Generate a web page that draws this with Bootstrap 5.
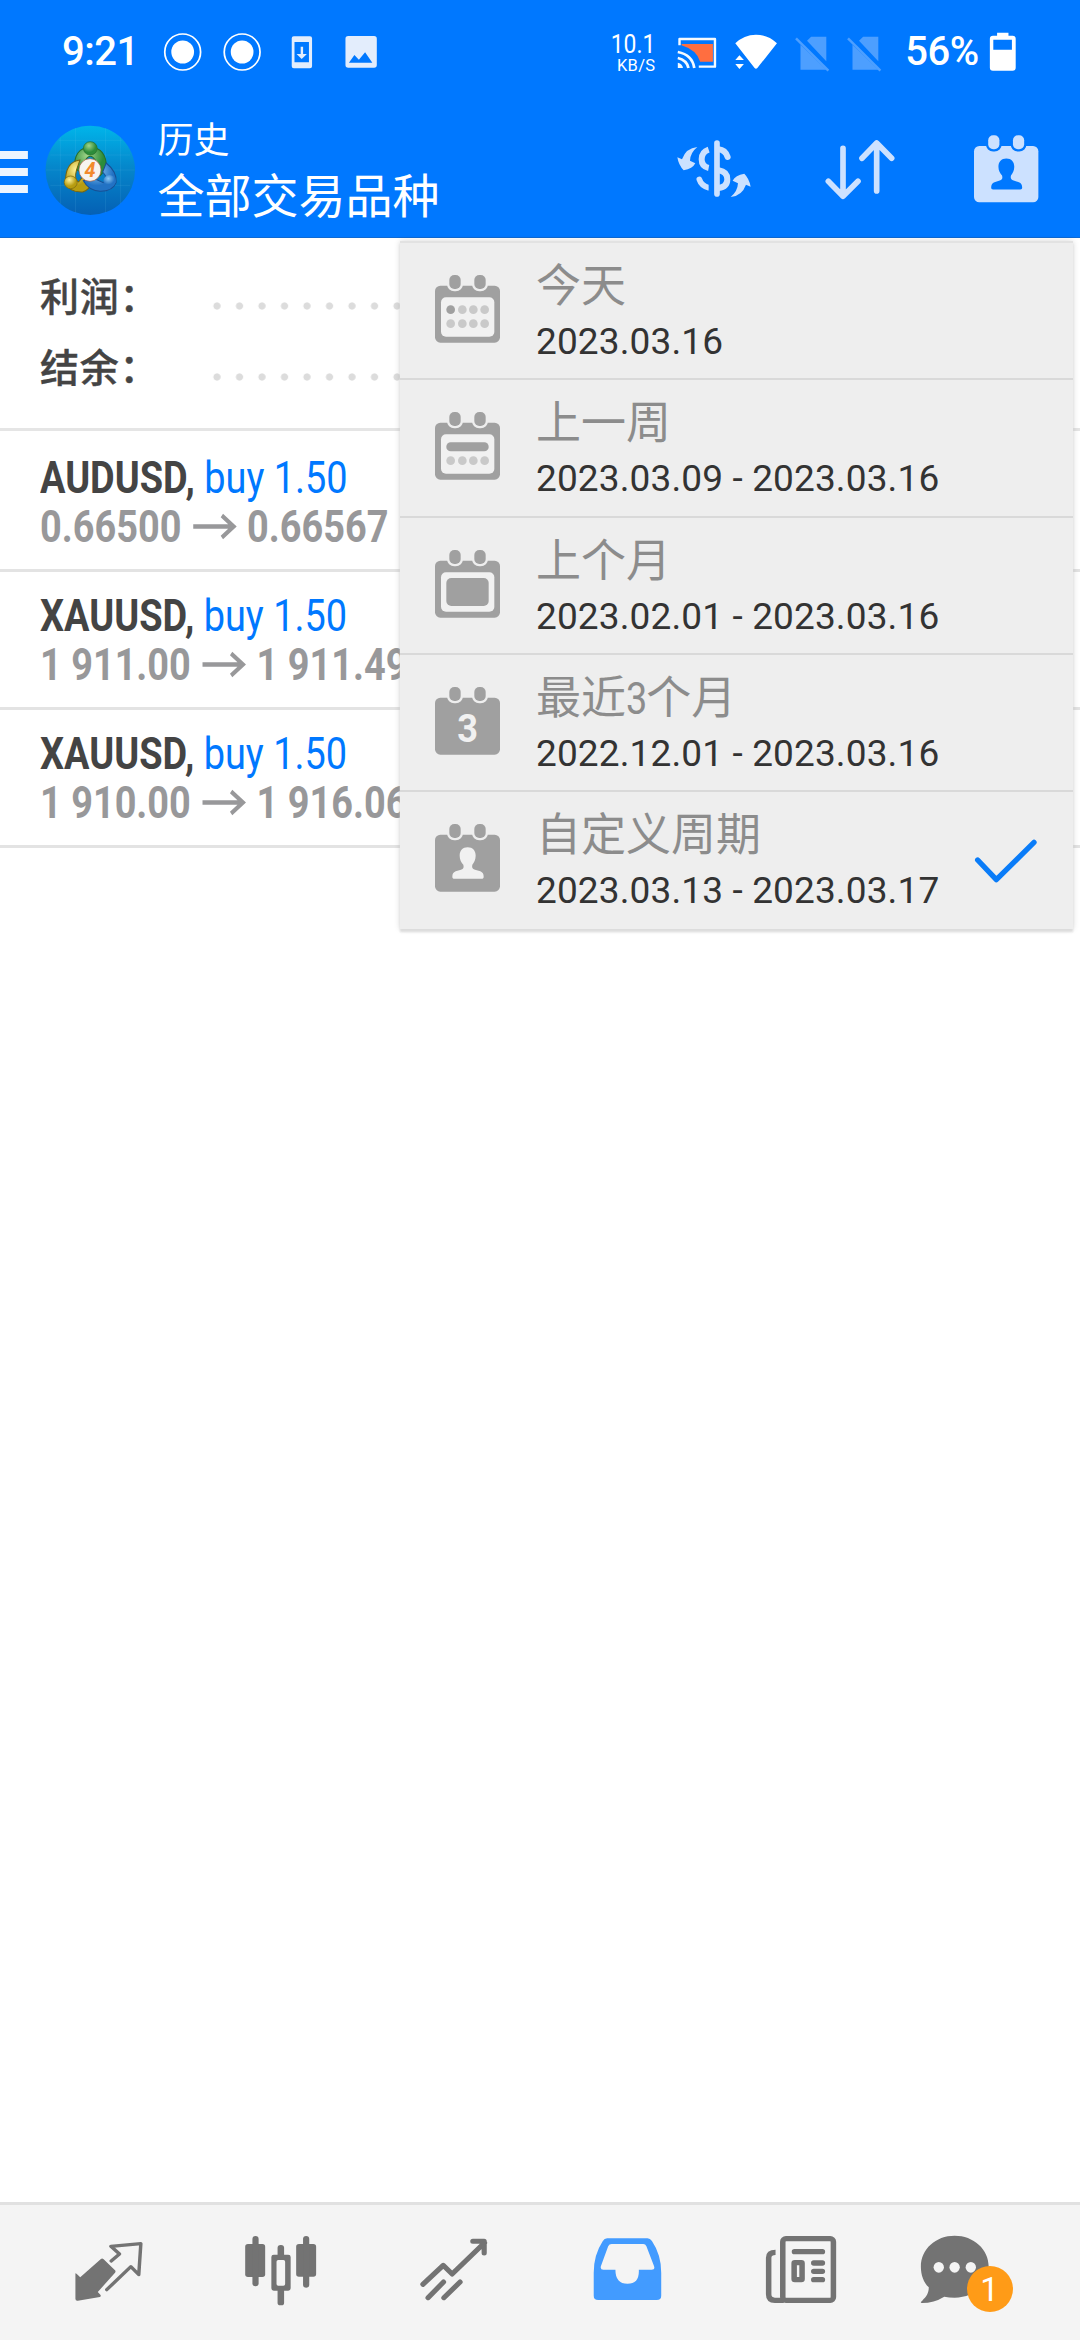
<!DOCTYPE html>
<html lang="zh-CN">
<head>
<meta charset="utf-8">
<meta name="viewport" content="width=device-width, initial-scale=1">
<title>历史</title>
<link href="https://cdn.jsdelivr.net/npm/bootstrap@5.3.0/dist/css/bootstrap.min.css" rel="stylesheet">
<style>
  :root { --brand: #0078ff; --icon: #cce1ff; --panel: #eeeeee; --grey: #a0a0a0; }
  body { font-family: Roboto, "Noto Sans CJK SC", sans-serif; height: 2340px; overflow: hidden; background: #fff; }
  svg { display: block; flex: none; overflow: visible; }
  .top-area { background: var(--brand); height: 238px; border-bottom: 1px solid #0e6ad4; }
  .status-row { height: 103px; }
  .clock { width: 161.8px; padding-left: 62px; font-size: 40px; font-weight: 500; line-height: 48px; letter-spacing: -.5px; }
  .net-speed { width: 134.3px; padding-right: 19px; font-size: 26px; line-height: 26px; padding-top: 2px; }
  .net-rate { transform: scaleX(.88); transform-origin: 100% 50%; }
  .net-unit { font-size: 16.5px; line-height: 18px; letter-spacing: .3px; }
  .percent { width: 95px; padding-left: 16px; font-size: 40px; font-weight: 500; line-height: 48px; letter-spacing: -.5px; }
  .app-row { height: 134px; padding-top: 17px; }
  .app-titles { padding-left: 13px; }
  .app-sub { font-size: 36px; line-height: 42px; }
  .app-main { font-size: 47px; line-height: 60px; margin-top: 5px; }
  .sum-box { height: 193px; padding: 31px 40px 0; border-bottom: 3px solid #e5e5e5; }
  .sum-line { height: 71px; font-size: 39px; font-weight: 500; line-height: 58px; color: #444; }
  .sum-label { width: 166px; letter-spacing: .8px; -webkit-text-stroke: .4px #444; }
  .dot-leader { height: 22px; background: radial-gradient(circle at 11px 11px, #dcdcdc 3.2px, transparent 4px) 0 0 / 22.5px 22px repeat-x; margin-top: 26px; }
  .deal { height: 138px; padding: 20px 0 0 40px; border-bottom: 3px solid #e3e3e3; font-size: 45px; line-height: 48.500px; }
  .deal:first-child { height: 141px; padding-top: 23px; }
  .squeeze { transform: scaleX(.842); transform-origin: 0 50%; white-space: pre; width: max-content; }
  .deal-name { color: #444; }
  .deal-side { color: var(--brand); }
  .deal-price { color: #98989a; font-weight: 700; }
  .deal-price svg { display: inline-block; vertical-align: 3px; margin: 0 13px 0 14px; }
  .period-menu { top: 3px; right: 7px; width: 673px; background: var(--panel); border-top: 2px solid #e2e2e2; box-shadow: 0 3px 2px #dcdcdc, 0 0 6px rgba(0,0,0,.16); }
  .period { height: 137.3px; background: transparent; border: 0; border-bottom: 2px solid #d9d9d9; border-radius: 0; padding: 0 35px 0 35px; }
  .period:last-child { border-bottom: 0; }
  .period-text { width: 475px; margin-left: 36px; }
  .period-title { font-size: 45px; line-height: 60px; color: #8c8c8c; padding-top: 14px; }
  .narrow-digit { display: inline-block; transform: scaleX(.84); margin: 0 -2.5px; }
  .period-range { font-size: 37px; line-height: 44px; color: #333; margin-top: 3px; letter-spacing: .13px; }
  .cal-ico { margin-top: 32px; }
  .tab-row { height: 138px; background: #f4f4f4; border-top: 3px solid #e1e1e1; }
  .tab-item { color: #737373; }
  .msg-count { left: 66.500px; top: 60.500px; width: 46px; height: 46px; background: #ff9b17; font-size: 33px; font-weight: 400; line-height: 47px; padding: 0; }
</style>
</head>
<body class="d-flex flex-column">

<svg width="0" height="0" class="position-absolute">
  <defs>
    <g id="calBase">
      <rect y="32" width="195" height="171" rx="16" fill="currentColor"/>
      <g stroke="var(--back)" stroke-width="14" fill="var(--back)"><rect x="43" y="2" width="34" height="40" rx="15"/><rect x="118" y="2" width="34" height="40" rx="15"/></g>
      <g fill="currentColor"><rect x="43" y="0" width="34" height="42" rx="15"/><rect x="118" y="0" width="34" height="42" rx="15"/></g>
    </g>
    <path id="person" d="M98 70c15 0 24 10 24 25 0 12-5 20-10 27-2 8 0 12 8 15l16 5c7 3 10 8 10 16 0 4-2 6-6 6H58c-4 0-6-2-6-6 0-8 3-13 10-16l16-5c8-3 9-7 7-15-6-7-11-15-11-27 0-15 9-25 24-25Z"/>
    <g id="sim"><path d="M774 120 786 108H830V182ZM755 132 830 207H755Z" fill="#4d9fff"/><path d="M742 113 836 210" stroke="#4d9fff" stroke-width="7"/></g>
    <linearGradient id="sky" x1="0" y1="0" x2="0" y2="1"><stop offset="0" stop-color="#00b5ea"/><stop offset=".45" stop-color="#0588cc"/><stop offset="1" stop-color="#0560b4"/></linearGradient>
    <radialGradient id="gGreen" cx=".4" cy=".3"><stop offset="0" stop-color="#a2d58a"/><stop offset="1" stop-color="#2c8c3a"/></radialGradient>
    <radialGradient id="gGold" cx=".4" cy=".3"><stop offset="0" stop-color="#fff29a"/><stop offset="1" stop-color="#b79c10"/></radialGradient>
    <radialGradient id="gBlue" cx=".4" cy=".3"><stop offset="0" stop-color="#8cc8f4"/><stop offset="1" stop-color="#2272c4"/></radialGradient>
  </defs>
</svg>

<header class="top-area text-white flex-shrink-0">
  <div class="status-row d-flex align-items-center">
    <div class="clock">9:21</div>
    <svg preserveAspectRatio="none" width="44.8" height="40" viewBox="470 94 130 120"><ellipse cx="530" cy="154" rx="52" ry="54" fill="none" stroke="#fff" stroke-width="5"/><ellipse cx="530" cy="154" rx="33" ry="34.500" fill="#fff"/></svg>
    <svg preserveAspectRatio="none" width="62" height="40" viewBox="600 94 180 120"><ellipse cx="702" cy="154" rx="52" ry="54" fill="none" stroke="#fff" stroke-width="5"/><ellipse cx="702" cy="154" rx="33" ry="34.500" fill="#fff"/></svg>
    <svg preserveAspectRatio="none" width="62" height="40" viewBox="780 94 180 120"><path fill="#e3edfc" fill-rule="evenodd" d="M852 107H899Q905 107 905 113V197Q905 203 899 203H852Q846 203 846 197V113Q846 107 852 107ZM854 124V185H896V124ZM872 138H879V160H890L875 175 860 160H872Z"/></svg>
    <svg preserveAspectRatio="none" width="62" height="40" viewBox="960 94 180 120"><path fill="#e3edfc" fill-rule="evenodd" d="M1010 106H1085Q1093 106 1093 114V193Q1093 201 1085 201H1010Q1002 201 1002 193V114Q1002 106 1010 106ZM1012 186H1080L1059 155 1041 177 1028 163Z"/></svg>
    <div class="net-speed text-end ms-auto"><div class="net-rate">10.1</div><div class="net-unit">KB/S</div></div>
    <svg preserveAspectRatio="none" width="51.65" height="40" viewBox="390 94 150 120"><path d="M412 130H503V183H466Q456 148 412 134Z" fill="#ff6e40"/><path d="M406 134V115H509V198H462" fill="none" stroke="#f4faff" stroke-width="7" stroke-linejoin="round"/><g fill="none" stroke="#f4faff" stroke-width="8"><path d="M401 154Q443 162 449 202M401 172Q427 178 432 202"/></g><path d="M401 186Q415 190 416 202H401Z" fill="#f4faff"/></svg>
    <svg preserveAspectRatio="none" width="58.54" height="40" viewBox="540 94 170 120"><path d="M567 128Q592 102 627 102T688 128L631 202Q627 207 623 202ZM567 178 579 164 592 178ZM567 190H592L579 205Z" fill="#fff"/></svg>
    <svg preserveAspectRatio="none" width="52.34" height="40" viewBox="710 94 152 120"><use href="#sim"/></svg>
    <svg preserveAspectRatio="none" width="52.34" height="40" viewBox="710 94 152 120"><use href="#sim"/></svg>
    <div class="percent">56%</div>
    <svg preserveAspectRatio="none" width="95.8" height="40" viewBox="1290 94 278 120"><path fill="#fff" fill-rule="evenodd" d="M1328 96H1361V105H1373Q1382 105 1382 114V201Q1382 210 1373 210H1316Q1307 210 1307 201V114Q1307 105 1316 105H1328ZM1317 117V147H1371V117Z"/></svg>
  </div>

  <div class="app-row d-flex">
    <svg preserveAspectRatio="none" width="37.9" height="100" viewBox="0 360 110 300"><path d="M0 453H81V477H0ZM0 504H81V528H0ZM0 555H81V579H0Z" fill="#edf5ff"/></svg>
    <svg preserveAspectRatio="none" width="106.7" height="100" viewBox="110 360 310 300">
      <ellipse cx="262" cy="511" rx="130" ry="134" fill="url(#sky)"/>
      <path d="M175 412V611M219 384V638M306 384V638M350 412V611M146 465H378M133 510H391M146 556H378M170 421H354" stroke="#7fd4f5" stroke-opacity=".22" stroke-width="1.5"/>
      <path d="M216 505Q214 443 262 442 309 443 309 505L290 528 276 480Q262 458 248 480L240 520Z" fill="url(#gGreen)" stroke="#276d2b" stroke-width="3"/>
      <path d="M232 480Q188 486 190 548 200 578 240 576 262 568 264 548L242 528 228 546Q214 540 222 510Z" fill="url(#gGold)" stroke="#766511" stroke-width="3"/>
      <path d="M308 489Q340 515 337 548 326 575 290 574 256 570 242 542L278 538 300 548Q316 535 298 516Z" fill="url(#gBlue)" stroke="#174f93" stroke-width="3"/>
      <circle cx="262" cy="445" r="20" fill="url(#gGreen)" stroke="#276d2b" stroke-width="2"/>
      <circle cx="205" cy="547" r="19" fill="url(#gGold)" stroke="#766511" stroke-width="2"/>
      <circle cx="318" cy="543" r="18" fill="url(#gBlue)"/>
      <ellipse cx="261" cy="510" rx="32" ry="34" fill="#f6f4f0" stroke="#a65a3c" stroke-width="2"/>
      <text x="261" y="530" text-anchor="middle" font-size="58" font-weight="700" font-style="italic" fill="#f28a2c">4</text>
    </svg>
    <div class="app-titles flex-grow-1">
      <div class="app-sub">历史</div>
      <div class="app-main">全部交易品种</div>
    </div>
    <svg width="153.3" height="100" viewBox="0 0 460 300">
      <g fill="none" stroke="#cce1ff" stroke-width="18"><path d="M206 89Q185 96 185 118T206 144"/><path d="M231 69V222M178 178Q184 197 206 203" stroke-linecap="round" stroke-width="17"/><path d="M236 88Q256 90 263 111" stroke-linecap="round"/><path d="M236 151Q262 155 262 178T236 204"/></g>
      <path id="swing" d="M112 112 126 118Q138 84 172 81 151 98 150 122L166 130Q158 146 131 151 116 136 112 112Z" fill="#cce1ff"/>
      <use href="#swing" transform="rotate(180 222 156)"/>
      <path d="M206 190V214L222 206V190Z" fill="#0078ff"/>
    </svg>
    <svg width="140" height="100" viewBox="460 0 420 300"><path d="M610 85V227M566 184 610 229 655 184M711 213V70M667 115 711 69 756 115" fill="none" stroke="#cce1ff" stroke-width="17" stroke-linecap="round" stroke-linejoin="round"/></svg>
    <svg width="146.7" height="100" viewBox="880 0 440 300"><g transform="translate(1003 46) scale(.99)" style="color:#cce1ff;--back:#0078ff"><use href="#calBase"/><use href="#person" fill="#0078ff"/></g></svg>
  </div>
</header>

<main class="flex-grow-1 position-relative">
  <section class="sum-box">
    <div class="sum-line d-flex"><div class="sum-label">利润：</div><div class="dot-leader flex-grow-1"></div></div>
    <div class="sum-line d-flex"><div class="sum-label">结余：</div><div class="dot-leader flex-grow-1"></div></div>
  </section>
  <section>
    <div class="deal"><div class="squeeze"><b class="deal-name">AUDUSD,</b> <span class="deal-side">buy 1.50</span></div><div class="squeeze deal-price">0.66500<svg width="51" height="25" viewBox="0 0 51 25"><path d="M0 12.5H48M34 1.5 48 12.5 34 23.500" fill="none" stroke="currentColor" stroke-width="4.500"/></svg>0.66567</div></div>
    <div class="deal"><div class="squeeze"><b class="deal-name">XAUUSD,</b> <span class="deal-side">buy 1.50</span></div><div class="squeeze deal-price">1 911.00<svg width="51" height="25" viewBox="0 0 51 25"><path d="M0 12.5H48M34 1.5 48 12.5 34 23.500" fill="none" stroke="currentColor" stroke-width="4.500"/></svg>1 911.49</div></div>
    <div class="deal"><div class="squeeze"><b class="deal-name">XAUUSD,</b> <span class="deal-side">buy 1.50</span></div><div class="squeeze deal-price">1 910.00<svg width="51" height="25" viewBox="0 0 51 25"><path d="M0 12.5H48M34 1.5 48 12.5 34 23.500" fill="none" stroke="currentColor" stroke-width="4.500"/></svg>1 916.06</div></div>
  </section>

  <div class="period-menu list-group rounded-0 position-absolute" style="color:#a0a0a0;--back:#eeeeee">
    <div class="period list-group-item d-flex" style="color:inherit">
      <svg class="cal-ico" width="65" height="68" viewBox="0 0 195 204"><use href="#calBase"/><rect x="18" y="67" width="160" height="118" rx="15" fill="#f1f1f1"/><g fill="#c9c9c9"><circle cx="47" cy="104" r="13" fill="#a0a0a0"/><circle cx="82" cy="104" r="13"/><circle cx="115" cy="104" r="13"/><circle cx="149" cy="104" r="13"/><circle cx="47" cy="146" r="13"/><circle cx="82" cy="146" r="13"/><circle cx="115" cy="146" r="13"/><circle cx="149" cy="146" r="13"/></g></svg>
      <div class="period-text"><div class="period-title">今天</div><div class="period-range">2023.03.16</div></div>
    </div>
    <div class="period list-group-item d-flex" style="color:inherit">
      <svg class="cal-ico" width="65" height="68" viewBox="0 0 195 204"><use href="#calBase"/><rect x="18" y="67" width="160" height="118" rx="15" fill="#f1f1f1"/><rect x="34" y="91" width="127" height="27" rx="13" fill="#a0a0a0"/><g fill="#c9c9c9"><circle cx="47" cy="146" r="13"/><circle cx="82" cy="146" r="13"/><circle cx="115" cy="146" r="13"/><circle cx="149" cy="146" r="13"/></g></svg>
      <div class="period-text"><div class="period-title">上一周</div><div class="period-range">2023.03.09 - 2023.03.16</div></div>
    </div>
    <div class="period list-group-item d-flex" style="color:inherit">
      <svg class="cal-ico" width="65" height="68" viewBox="0 0 195 204"><use href="#calBase"/><rect x="18" y="67" width="160" height="118" rx="15" fill="#f1f1f1"/><rect x="34" y="84" width="127" height="84" rx="15" fill="#a0a0a0"/></svg>
      <div class="period-text"><div class="period-title">上个月</div><div class="period-range">2023.02.01 - 2023.03.16</div></div>
    </div>
    <div class="period list-group-item d-flex" style="color:inherit">
      <svg class="cal-ico" width="65" height="68" viewBox="0 0 195 204"><use href="#calBase"/><text transform="translate(98 164) scale(.92 1)" text-anchor="middle" font-size="118" font-weight="700" fill="#f1f1f1">3</text></svg>
      <div class="period-text"><div class="period-title">最近<span class="narrow-digit">3</span>个月</div><div class="period-range">2022.12.01 - 2023.03.16</div></div>
    </div>
    <div class="period list-group-item d-flex" style="color:inherit">
      <svg class="cal-ico" width="65" height="68" viewBox="0 0 195 204"><use href="#calBase"/><use href="#person" fill="#f1f1f1"/></svg>
      <div class="period-text"><div class="period-title">自定义周期</div><div class="period-range">2023.03.13 - 2023.03.17</div></div>
      <svg class="align-self-center" width="62" height="44" viewBox="705 590 186 132" style="margin-left:-36px"><path d="M713 653 769 712 882 600" fill="none" stroke="#0a7cf8" stroke-width="16" stroke-linecap="round" stroke-linejoin="round"/></svg>
    </div>
  </div>
</main>

<nav class="tab-row d-flex flex-shrink-0">
  <div class="tab-item"><svg preserveAspectRatio="none" width="180" height="129.7" viewBox="0 75 522.7 389"><path d="M219 282Q218 278 223 282L233 292 293 237Q297 234 301 238L334 271Q337 274 334 278L284 336 292 345Q294 349 290 351L226 362Q219 363 219 356Z" fill="currentColor"/><path d="M323 243 347 222 322 199 409 191 403 284 380 260 310 329" fill="none" stroke="currentColor" stroke-width="10" stroke-linejoin="round" stroke-linecap="round"/></svg></div>
  <div class="tab-item"><svg preserveAspectRatio="none" width="180" height="129.7" viewBox="522.7 75 522.7 389"><g fill="currentColor"><rect x="712" y="192" width="58" height="99" rx="8"/><rect x="860" y="192" width="58" height="98" rx="8"/><rect x="733" y="168" width="18" height="151" rx="9"/><rect x="880" y="168" width="18" height="155" rx="9"/><rect x="806" y="195" width="19" height="40" rx="9"/><rect x="806" y="325" width="19" height="51" rx="8"/><path fill-rule="evenodd" d="M795 224H837Q844 224 844 231V325Q844 332 837 332H795Q788 332 788 325V231Q788 224 795 224ZM808 240Q803 240 803 245V312Q803 317 808 317H823Q828 317 828 312V245Q828 240 823 240Z"/></g></svg></div>
  <div class="tab-item"><svg preserveAspectRatio="none" width="180" height="129.7" viewBox="1045.400 75 522.7 389"><path d="M1228 313 1287 256 1313 282 1407 188M1373 184H1406V219M1243 353 1288 306M1289 353 1336 306" fill="none" stroke="currentColor" stroke-width="15" stroke-linecap="round" stroke-linejoin="round"/></svg></div>
  <div class="tab-item"><svg preserveAspectRatio="none" width="180" height="129.7" viewBox="0 75 522.7 389"><path fill="#429bff" fill-rule="evenodd" d="M195 175H312Q320 175 325 183 352 224 352 278V347Q352 360 339 360H169Q156 360 156 347V278Q156 225 182 184 187 175 195 175ZM208 192Q201 192 198 199L177 258Q174 269 184 269H219Q219 311 254 311T287 269H324Q335 269 331 258L309 199Q306 192 300 192Z"/></svg></div>
  <div class="tab-item"><svg preserveAspectRatio="none" width="180" height="129.7" viewBox="522.7 75 522.7 389"><g fill="none" stroke="currentColor"><rect x="705" y="176" width="147" height="185" rx="9" stroke-width="16"/><path d="M684 217Q664 217 664 233V343Q664 361 682 361H708" stroke-width="16"/><path d="M739 215H820M795 249H820M795 274H820M795 299H820" stroke-width="16" stroke-linecap="round"/><rect x="738" y="248" width="23" height="51" rx="2" stroke-width="16"/></g></svg></div>
  <div class="tab-item position-relative"><svg preserveAspectRatio="none" width="180" height="129.7" viewBox="1045.400 75 522.7 389"><path d="M1204 167C1259 167 1303 207 1303 260S1259 353 1204 353Q1188 353 1174 350 1144 369 1109 369 1102 368 1110 362C1122 350 1129 340 1129 322 1114 307 1106 285 1106 260 1106 207 1149 167 1204 167Z" fill="currentColor"/><g fill="#f4f4f4"><ellipse cx="1158" cy="262" rx="15" ry="16"/><ellipse cx="1204" cy="262" rx="15" ry="16"/><ellipse cx="1251" cy="262" rx="15" ry="16"/></g></svg><span class="msg-count badge rounded-circle position-absolute">1</span></div>
</nav>
<script src="https://cdn.jsdelivr.net/npm/bootstrap@5.3.0/dist/js/bootstrap.bundle.min.js"></script>
</body>
</html>
